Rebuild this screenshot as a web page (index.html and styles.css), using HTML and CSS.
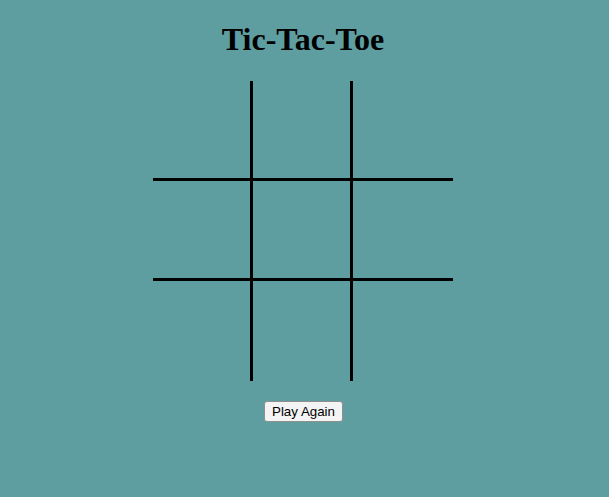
FILE: index.html
```html
<!DOCTYPE html>
<html lang="en">
<head>
<meta charset="utf-8">
<title>Tic-Tac-Toe</title>
<link rel="stylesheet" href="styles.css">
</head>
<body>
<main class="game">
  <h1 class="title">Tic-Tac-Toe</h1>
  <div class="board">
    <div class="cell r c"></div>
    <div class="cell r c"></div>
    <div class="cell r"></div>
    <div class="cell r c"></div>
    <div class="cell r c"></div>
    <div class="cell r"></div>
    <div class="cell c"></div>
    <div class="cell c"></div>
    <div class="cell"></div>
  </div>
  <button class="reset" type="button">Play Again</button>
</main>
</body>
</html>
```

FILE: styles.css
```css
html, body {
  margin: 0;
  padding: 0;
  background: #5f9ea0;
}

.game {
  display: flex;
  flex-direction: column;
  align-items: center;
  padding-right: 3px;
}

.title {
  font-family: "Liberation Serif", "Times New Roman", serif;
  font-size: 32px;
  font-weight: bold;
  margin: 21px 0 23px;
  line-height: 37px;
  color: #000;
}

.board {
  display: grid;
  grid-template-columns: repeat(3, 100px);
  grid-template-rows: repeat(3, 100px);
}

.cell {
  box-sizing: border-box;
}

.cell.c {
  border-right: 3px solid #000;
}

.cell.r {
  border-bottom: 3px solid #000;
}

.reset {
  box-sizing: border-box;
  margin-top: 20px;
  margin-left: 1px;
  font-family: "Liberation Sans", Arial, sans-serif;
  font-size: 13.333px;
  padding: 1px 7px;
  background: #f4f4f4;
  border: 1px solid #8f8f8f;
  border-radius: 3px;
  color: #000;
  width: 79px;
  height: 21px;
  line-height: 17px;
}
```
